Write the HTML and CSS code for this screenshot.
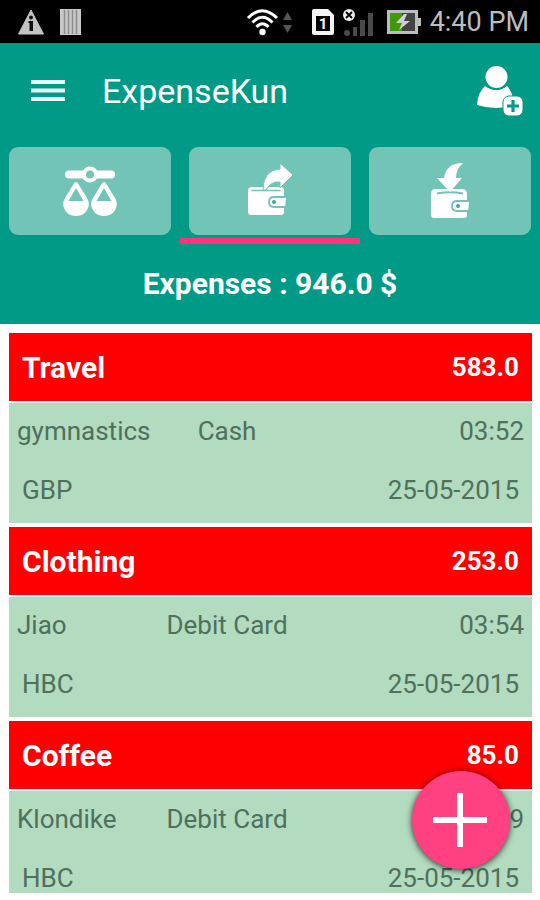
FILE: index.html
```html
<!DOCTYPE html>
<html lang="en">
<head>
    <meta charset="UTF-8">
    <meta name="viewport" content="width=device-width, initial-scale=1.0">
    <title>ExpenseKun</title>
    <link rel="stylesheet" href="styles.css">
</head>
<body>
    <div class="status-bar">
        <div class="status-left">
            <svg width="26" height="26" viewBox="0 0 26 26">
                <path d="M13 1 L25.500 25 H0.500 Z" fill="#c4c4c4" stroke="#c4c4c4" stroke-linejoin="round"/>
                <circle cx="13" cy="8.500" r="2" fill="#111"/>
                <path d="M10.500 12 H15 V22 H11.500 V14 H10.500 Z" fill="#111"/>
            </svg>
            <svg width="22" height="26" viewBox="0 0 22 26">
                <rect width="21" height="26" fill="#c8c8c8"/>
                <path d="M4.500 1 V25 M8.500 1 V25 M12.500 1 V25 M16.500 1 V25" stroke="#8c8c8c" stroke-width="1.500"/>
            </svg>
        </div>
        <div class="status-right">
            <svg width="44" height="28" viewBox="0 0 44 28">
                <g fill="none" stroke="#fff" stroke-width="3">
                    <path d="M1 10 Q15 -4.500 30 10"/>
                    <path d="M5.500 14.500 Q15.500 4 25.500 14.500"/>
                    <path d="M9.500 19 Q15.500 12.500 21.500 19"/>
                </g>
                <circle cx="15.500" cy="24" r="3.200" fill="#fff"/>
                <path d="M36 12 L40.500 4 L45 12 Z M36 17 H45 L40.500 25 Z" fill="#555"/>
            </svg>
            <svg class="sim" width="22" height="28" viewBox="0 0 22 28">
                <path d="M2 1 H16 L22 7 V25 Q22 27 20 27 H2 Q0 27 0 25 V3 Q0 1 2 1 Z" fill="#f4f4f4"/>
                <rect x="4" y="8" width="14" height="15" fill="#000"/>
                <text x="11" y="21" text-anchor="middle">1</text>
            </svg>
            <svg class="signal" width="31" height="28" viewBox="0 0 31 28">
                <circle cx="6" cy="7" r="6" fill="#eee"/>
                <path d="M3 4 L9 10 M9 4 L3 10" stroke="#000" stroke-width="1.800"/>
                <path d="M10 19 H14 V28 H10 Z M17 12 H22 V28 H17 Z M25 5 H30 V28 H25 Z" fill="#4a4a4a"/>
                <circle cx="4" cy="25" r="3" fill="#4a4a4a"/>
            </svg>
            <svg width="34" height="26" viewBox="0 0 34 26">
                <rect x="1.500" y="2.500" width="28" height="21" fill="#444" stroke="#bdbdbd" stroke-width="3"/>
                <rect x="3" y="4" width="12" height="18" fill="#3f9a0b"/>
                <rect x="30" y="9" width="4" height="8" fill="#bdbdbd"/>
                <path d="M17 5 L9 14 L15 14 L12 21 L23 12 L17 12 L20 5 Z" fill="#d0d0d0"/>
            </svg>
            <span class="clock">4:40 PM</span>
        </div>
    </div>

    <header>
        <div class="app-bar">
            <button class="icon-btn" aria-label="Menu">
                <svg width="36" height="22" viewBox="0 0 36 22">
                    <path d="M1 2 H35 M1 10.500 H35 M1 19 H35" stroke="#e6fffb" stroke-width="4"/>
                </svg>
            </button>
            <h1>ExpenseKun</h1>
            <button class="icon-btn" aria-label="Add user">
                <svg width="48" height="52" viewBox="0 0 48 52">
                    <path d="M9 21 Q20 29 31 21 Q37 27 38 40 Q20 46 1 40 Q2 27 9 21 Z" fill="#fff"/>
                    <circle cx="20.500" cy="12" r="12" fill="#fff" stroke="#009a87" stroke-width="2"/>
                    <rect x="27" y="31" width="20" height="20" rx="6" fill="#fff" stroke="#009a87"/>
                    <path d="M37 35 V47 M31 41 H43" stroke="#009a87" stroke-width="3.200"/>
                </svg>
            </button>
        </div>

        <nav>
            <a href="#" aria-label="Balance">
                <span class="tab">
                    <svg width="56" height="52" viewBox="0 0 56 52">
                        <path d="M7 9.500 H49" stroke="#fff" stroke-width="8" stroke-linecap="round"/>
                        <circle cx="28" cy="9.500" r="6" fill="#72c4b7" stroke="#fff" stroke-width="4"/>
                        <path id="pan" d="M14 17 Q15.500 17 17 20 L25 33 Q28 38 26 43 Q23 51 14 51 Q5 51 2 43 Q0 38 3 33 L11 20 Q12.500 17 14 17 Z M14 23 L6.500 36 H21.500 Z" fill="#fff" fill-rule="evenodd"/>
                        <use href="#pan" x="28"/>
                    </svg>
                </span>
            </a>
            <a href="#" class="active" aria-label="Expenses">
                <span class="tab">
                    <svg width="46" height="54" viewBox="0 0 46 54">
                        <path d="M5 23 H33 Q37 23 37 27 V48 Q37 51 34 51 H4 Q1 51 1 48 V27 Q1 23 5 23 Z" fill="#fff"/>
                        <path d="M5 26.500 H33" stroke="#72c4b7" stroke-width="1.500" stroke-linecap="round"/>
                        <path d="M16 26 Q16 6 33 5 V-1 L46 11 L33 24 V18 Q24 17 19 26 Z" fill="#fff" stroke="#72c4b7"/>
                        <path d="M40 33 H27 Q22 33 22 38 Q22 43 27 43 H39 Z" fill="#fff" stroke="#72c4b7" stroke-width="1.800"/>
                        <circle cx="27" cy="38" r="2" fill="#3fa797"/>
                    </svg>
                </span>
            </a>
            <a href="#" aria-label="Income">
                <span class="tab">
                    <svg width="38" height="56" viewBox="0 0 38 56">
                        <path d="M4 26 H32 Q36 27 36 31 V52 Q36 55 33 55 H3 Q0 55 0 52 V31 Q0 26 4 26 Z" fill="#fff"/>
                        <path d="M6 30.500 Q19 28 32 30.500" fill="none" stroke="#72c4b7" stroke-width="2"/>
                        <path d="M32 0 Q15 0 13 15 H6 L19 29 L31 15 H25 Q25 6 32 0 Z" fill="#fff"/>
                        <path d="M39 38 H26 Q21 38 21 43 Q21 48 26 48 H38 Z" fill="#fff" stroke="#72c4b7" stroke-width="1.800"/>
                        <circle cx="27" cy="43" r="2" fill="#3fa797"/>
                    </svg>
                </span>
            </a>
        </nav>

        <p class="total">Expenses : 946.0 $</p>
    </header>

    <main>
        <section class="expense">
            <div class="category">
                <h2>Travel</h2>
                <span class="amount">583.0</span>
            </div>
            <div class="details">
                <div class="payment">
                    <span>gymnastics</span>
                    <span>Cash</span>
                    <span>03:52</span>
                </div>
                <div class="bank">
                    <span>GBP</span>
                    <span>25-05-2015</span>
                </div>
            </div>
        </section>
        <section class="expense">
            <div class="category">
                <h2>Clothing</h2>
                <span class="amount">253.0</span>
            </div>
            <div class="details">
                <div class="payment">
                    <span>Jiao</span>
                    <span>Debit Card</span>
                    <span>03:54</span>
                </div>
                <div class="bank">
                    <span>HBC</span>
                    <span>25-05-2015</span>
                </div>
            </div>
        </section>
        <section class="expense">
            <div class="category">
                <h2>Coffee</h2>
                <span class="amount">85.0</span>
            </div>
            <div class="details">
                <div class="payment">
                    <span>Klondike</span>
                    <span>Debit Card</span>
                    <span>03:59</span>
                </div>
                <div class="bank">
                    <span>HBC</span>
                    <span>25-05-2015</span>
                </div>
            </div>
        </section>
    </main>

    <button class="add-expense" aria-label="Add expense">
        <svg width="54" height="54" viewBox="0 0 54 54">
            <path d="M26 0 V54 M-1 27 H53" stroke="#fff" stroke-width="6"/>
        </svg>
    </button>
</body>
</html>
```

FILE: styles.css
```css
/* Reset and base styles */
* {
    margin: 0;
    padding: 0;
    box-sizing: border-box;
}

body {
    font-family: Roboto, sans-serif;
    background-color: #fefefe;
    height: 100vh;
    display: flex;
    flex-direction: column;
    overflow: hidden;
}

svg {
    display: block;
    overflow: visible;
}

button {
    background: none;
    border: none;
    cursor: pointer;
}

.status-bar {
    background-color: #000;
    color: #bdbdbd;
    height: 43px;
    padding: 0 11px 0 18px;
    display: flex;
    flex-shrink: 0;
    justify-content: space-between;
    align-items: center;
}

.status-left {
    display: flex;
    gap: 16px;
}

.status-right {
    display: flex;
    align-items: center;
    gap: 9px;
}

.sim {
    margin-left: 12px;
}

.sim text {
    font-size: 15px;
    font-weight: bold;
    fill: #fff;
}

.signal {
    margin-right: 4px;
}

.clock {
    font-size: 27px;
    line-height: 32px;
}

header {
    background-color: #009a87;
    color: white;
    flex-shrink: 0;
}

.app-bar {
    display: flex;
    align-items: center;
    height: 96px;
    padding: 0 16px 0 30px;
}

.app-bar h1 {
    flex: 1;
    margin-left: 36px;
    font-size: 34px;
    font-weight: normal;
}

nav {
    display: flex;
    padding-top: 8px;
}

nav a {
    flex: 1;
    padding: 0 9px 3px;
    border-bottom: 6px solid transparent;
}

nav a.active {
    border-bottom-color: #ff347c;
}

.tab {
    display: flex;
    align-items: center;
    justify-content: center;
    height: 88px;
    background-color: #72c4b7;
    border-radius: 9px;
}

.total {
    text-align: center;
    font-size: 30px;
    font-weight: bold;
    line-height: 80px;
}

main {
    flex: 1;
    min-height: 0;
    margin: 9px 8px 7px 9px;
    overflow: hidden;
}

.expense {
    margin-bottom: 4px;
}

.category {
    background-color: #ff0000;
    color: white;
    display: flex;
    justify-content: space-between;
    align-items: center;
    height: 68px;
    padding: 0 13px;
    margin-bottom: 2px;
}

.category h2 {
    font-size: 30px;
}

.amount {
    font-size: 26px;
    font-weight: bold;
}

.details {
    background-color: #b2dbbf;
    color: #4f705c;
    padding: 14px 8px 19px;
    font-size: 26px;
    line-height: 28px;
}

.payment {
    display: grid;
    grid-template-columns: 10fr 9fr 16fr;
    margin-bottom: 31px;
}

.payment span:nth-child(2) {
    text-align: center;
}

.payment span:last-child {
    text-align: right;
}

.bank {
    display: flex;
    justify-content: space-between;
    padding: 0 5px;
}

/* Floating add button */
.add-expense {
    position: fixed;
    right: 30px;
    bottom: 31px;
    width: 98px;
    height: 98px;
    display: flex;
    align-items: center;
    justify-content: center;
    background-color: #ff4081;
    border-radius: 50%;
    box-shadow: 0 1px 6px rgba(0, 0, 0, 0.8);
}
```
